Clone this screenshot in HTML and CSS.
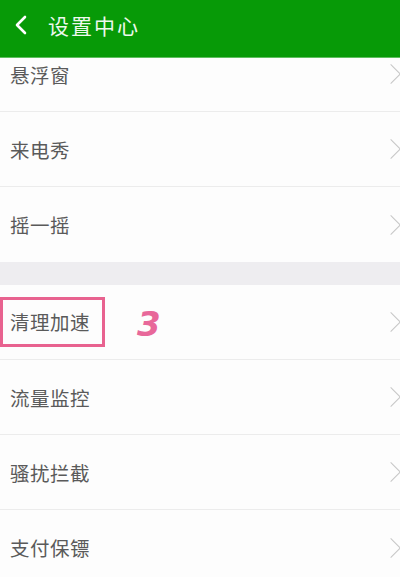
FILE: index.html
```html
<!DOCTYPE html>
<html lang="zh">
<head>
    <meta charset="UTF-8">
    <meta name="viewport" content="width=device-width, initial-scale=1.0">
    <title>设置中心</title>
    <link rel="stylesheet" href="styles.css">
</head>
<body>
    <header class="topbar">
        <svg class="back" width="14" height="20" viewBox="0 0 14 20">
            <path d="M11 2 L3 10 L11 18" fill="none" stroke="#fff" stroke-width="2.6" stroke-linecap="round" stroke-linejoin="round"/>
        </svg>
        <h1>设置中心</h1>
    </header>

    <main class="content">
        <ul class="list">
            <li class="row"><span class="label">悬浮窗</span><i class="arrow"></i></li>
            <li class="row"><span class="label">来电秀</span><i class="arrow"></i></li>
            <li class="row last"><span class="label">摇一摇</span><i class="arrow"></i></li>
        </ul>
        <div class="gap"></div>
        <ul class="list">
            <li class="row">
                <span class="label marked">清理加速</span>
                <span class="step">3</span>
                <i class="arrow"></i>
            </li>
            <li class="row"><span class="label">流量监控</span><i class="arrow"></i></li>
            <li class="row"><span class="label">骚扰拦截</span><i class="arrow"></i></li>
            <li class="row last"><span class="label">支付保镖</span><i class="arrow"></i></li>
        </ul>
    </main>
</body>
</html>
```

FILE: styles.css
```css
/* Pantalla de ajustes */
body {
    margin: 0;
    padding: 0;
    width: 400px;
    height: 577px;
    overflow: hidden;
    background-color: #fdfdfd;
    font-family: "Noto Sans CJK SC", "Noto Sans", sans-serif;
}

.topbar {
    position: relative;
    z-index: 2;
    height: 58px;
    background-color: #079a07;
    display: flex;
    align-items: center;
    padding-left: 14px;
    box-sizing: border-box;
    border-bottom: 1px solid #5fbf5f;
}

.back {
    margin-top: -8px;
}

.topbar h1 {
    margin: -8px 0 0 20px;
    font-size: 21px;
    font-weight: normal;
    color: #eef8ee;
    letter-spacing: 2px;
}

.content {
    margin-top: -21px;
}

.list {
    list-style: none;
    margin: 0;
    padding: 0;
    background-color: #fdfdfd;
}

.row {
    height: 74px;
    display: flex;
    align-items: center;
    padding-left: 10px;
    border-bottom: 1px solid #ececec;
    position: relative;
}

.row.last {
    border-bottom: none;
    height: 75px;
}

.label {
    font-size: 19.5px;
    color: #5a5a5a;
    letter-spacing: 0.5px;
}

/* recuadro rosa */
.marked {
    margin-left: -10px;
    padding: 7px 12px 8px 7px;
    border: 3px solid #e8628f;
}

.step {
    margin-left: 32px;
    margin-top: 4px;
    font-family: "DejaVu Sans", sans-serif;
    font-size: 34px;
    font-weight: bold;
    font-style: italic;
    color: #e8689a;
}

.arrow {
    position: absolute;
    right: 2px;
    top: 50%;
    width: 13px;
    height: 13px;
    margin-top: -7px;
    border-top: 1.5px solid #c6c6c6;
    border-right: 1.5px solid #c6c6c6;
    transform: rotate(45deg);
}

.gap {
    height: 23px;
    background-color: #eeedf0;
}
```
